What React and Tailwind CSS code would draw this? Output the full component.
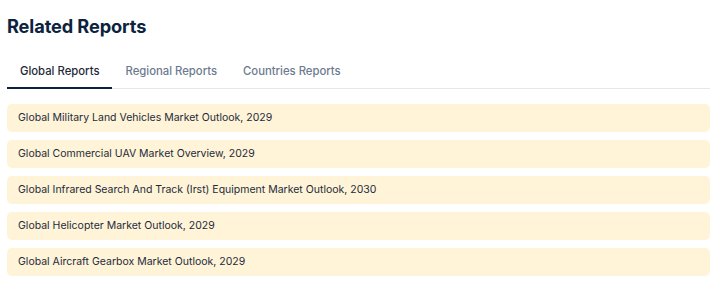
import React, { useState } from 'react';

const tabs = ['Global Reports', 'Regional Reports', 'Countries Reports'];

const reports = [
  'Global Military Land Vehicles Market Outlook, 2029',
  'Global Commercial UAV Market Overview, 2029',
  'Global Infrared Search And Track (Irst) Equipment Market Outlook, 2030',
  'Global Helicopter Market Outlook, 2029',
  'Global Aircraft Gearbox Market Outlook, 2029',
];

export default function App() {
  const [active, setActive] = useState(0);

  return (
    <div className="min-h-screen bg-white px-[7px] pt-[13px] font-['Inter',sans-serif] w-[720px]">
      <div className="w-[703px]">
        <h2 className="text-[18.2px] font-bold text-[#0c2340] leading-[26px] tracking-[-0.1px]">
          Related Reports
        </h2>

        {/* Tabs */}
        <div className="mt-[19px] flex border-b border-[#e5e7eb]">
          {tabs.map((t, i) => (
            <button
              key={t}
              onClick={() => setActive(i)}
              className={`-mb-px pt-[7px] pb-[10px] px-[13px] text-[11.3px] font-medium leading-[12px] border-b-2 ${
                active === i
                  ? 'border-[#0c2340] text-[#1f2937]'
                  : 'border-transparent text-[#6b7a90]'
              }`}
            >
              {t}
            </button>
          ))}
        </div>

        {/* Report list */}
        <div className="mt-[15px] flex flex-col gap-[8px]">
          {reports.map((r) => (
            <a
              key={r}
              href="#"
              className="flex h-[28px] items-center rounded-[5px] bg-[#fff4d8] px-[11px] text-[10.5px] text-[#1e2a3b]"
            >
              {r}
            </a>
          ))}
        </div>
      </div>
    </div>
  );
}
